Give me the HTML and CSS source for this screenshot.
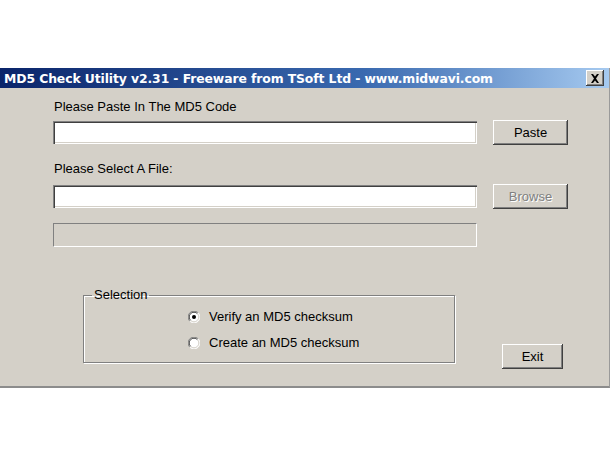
FILE: index.html
```html
<!DOCTYPE html>
<html lang="en">
<head>
    <meta charset="UTF-8">
    <title>MD5 Check Utility</title>
    <link rel="stylesheet" href="styles.css">
</head>
<body>
    <div class="window">
        <div class="titlebar">
            <span class="title">MD5 Check Utility v2.31 - Freeware from TSoft Ltd - www.midwavi.com</span>
            <span class="close">
                <svg width="10" height="9" viewBox="0 0 10 9"><path d="M1 0h2l2 2.5L7 0h2L6 4.5 9 9H7L5 6.5 3 9H1l3-4.5z" fill="#000"/></svg>
            </span>
        </div>

        <div class="content">
            <div class="label first">Please Paste In The MD5 Code</div>
            <div class="field-row">
                <div class="textbox"></div>
                <div class="button">Paste</div>
            </div>

            <div class="label label-gap">Please Select A File:</div>
            <div class="field-row">
                <div class="textbox"></div>
                <div class="button disabled">Browse</div>
            </div>

            <div class="progress"></div>

            <div class="bottom-row">
                <fieldset class="group">
                    <legend>Selection</legend>
                    <div class="options">
                        <div class="option">
                            <svg class="radio" width="12" height="12" viewBox="0 0 12 12">
                                <circle cx="6" cy="6" r="5.5" fill="#fff"/>
                                <path d="M1.8 10.2A5.5 5.5 0 0 1 10.2 1.8" fill="none" stroke="#808080" stroke-width="1"/>
                                <path d="M2.6 9.4A4.4 4.4 0 0 1 9.4 2.6" fill="none" stroke="#404040" stroke-width="1"/>
                                <path d="M10.2 1.8A5.5 5.5 0 0 1 1.8 10.2" fill="none" stroke="#fff" stroke-width="1"/>
                                <path d="M9.4 2.6A4.4 4.4 0 0 1 2.6 9.4" fill="none" stroke="#d4d0c8" stroke-width="1"/>
                                <circle cx="6" cy="6" r="2" fill="#000"/>
                            </svg>
                            <span>Verify an MD5 checksum</span>
                        </div>
                        <div class="option">
                            <svg class="radio" width="12" height="12" viewBox="0 0 12 12">
                                <circle cx="6" cy="6" r="5.5" fill="#fff"/>
                                <path d="M1.8 10.2A5.5 5.5 0 0 1 10.2 1.8" fill="none" stroke="#808080" stroke-width="1"/>
                                <path d="M2.6 9.4A4.4 4.4 0 0 1 9.4 2.6" fill="none" stroke="#404040" stroke-width="1"/>
                                <path d="M10.2 1.8A5.5 5.5 0 0 1 1.8 10.2" fill="none" stroke="#fff" stroke-width="1"/>
                                <path d="M9.4 2.6A4.4 4.4 0 0 1 2.6 9.4" fill="none" stroke="#d4d0c8" stroke-width="1"/>
                            </svg>
                            <span>Create an MD5 checksum</span>
                        </div>
                    </div>
                </fieldset>
                <div class="button exit">Exit</div>
            </div>
        </div>
    </div>
</body>
</html>
```

FILE: styles.css
```css
body {
    margin: 0;
    background: #fff;
    font-family: "Liberation Sans", Arial, sans-serif;
    font-size: 13px;
    color: #000;
}
.window {
    width: 610px;
    margin-top: 68px;
    background: #d4d0c8;
    border-right: 1px solid #9a9a9a;
    border-bottom: 2px solid #8c8c8c;
    box-sizing: border-box;
}
.titlebar {
    height: 20px;
    display: flex;
    align-items: center;
    justify-content: space-between;
    padding: 0 5px 0 4px;
    background: linear-gradient(to right, #0a246a 0%, #3a6ab0 60%, #a6caf0 100%);
    color: #fff;
    font-family: "DejaVu Sans", Verdana, sans-serif;
    font-weight: bold;
    font-size: 12.4px;
    letter-spacing: -0.1px;
}
.close {
    width: 18px;
    height: 16px;
    display: flex;
    align-items: center;
    justify-content: center;
    background: #d4d0c8;
    box-shadow: inset -1px -1px 0 #404040, inset 1px 1px 0 #fff, inset -2px -2px 0 #808080;
}
.content {
    padding: 8px 0 17px 53px;
}
.label {
    line-height: 18px;
    padding-left: 1px;
}
.first {
    margin-top: 2px;
}
.first + .field-row {
    margin-top: 4px;
}
.label-gap {
    margin-top: 15px;
}
.field-row {
    display: flex;
    align-items: center;
    gap: 16px;
    margin-top: 6px;
}
.textbox {
    width: 424px;
    height: 23px;
    box-sizing: border-box;
    background: #fff;
    box-shadow: inset 1px 1px 0 #808080, inset 2px 2px 0 #404040, inset -1px -1px 0 #fff, inset -2px -2px 0 #d4d0c8;
}
.button {
    width: 75px;
    height: 25px;
    display: flex;
    align-items: center;
    justify-content: center;
    background: #d4d0c8;
    box-shadow: inset -1px -1px 0 #404040, inset 1px 1px 0 #fff, inset -2px -2px 0 #808080;
}
.disabled {
    color: #808080;
    text-shadow: 1px 1px 0 #fff;
}
.progress {
    width: 424px;
    height: 24px;
    margin-top: 14px;
    box-sizing: border-box;
    border: 1px solid;
    border-color: #808080 #fff #fff #808080;
}
.bottom-row {
    display: flex;
    align-items: flex-start;
    margin-top: 40px;
}
.group {
    width: 372px;
    box-sizing: border-box;
    margin: 0 0 0 30px;
    padding: 0 0 9px 0;
    border: 1px solid #808080;
    box-shadow: inset 1px 1px 0 #fff, 1px 1px 0 #fff;
}
.group legend {
    margin-left: 8px;
    padding: 0 2px;
    line-height: 16px;
}
.options {
    display: flex;
    flex-direction: column;
    gap: 6px;
    margin: 4px 0 0 104px;
}
.option {
    display: flex;
    align-items: center;
    gap: 9px;
    line-height: 20px;
}
.exit {
    width: 61px;
    margin: 57px 0 0 47px;
}
```
